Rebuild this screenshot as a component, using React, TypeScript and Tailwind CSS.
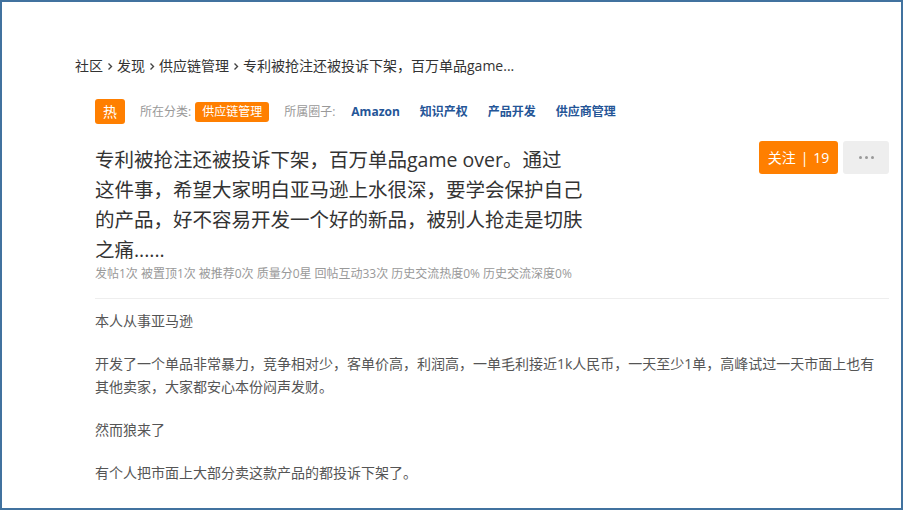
const font = { fontFamily: '"Open Sans", "Noto Sans CJK SC", sans-serif' };

function Chevron() {
  return (
    <svg width="6" height="9" viewBox="0 0 6 9" className="mx-[4px] mt-[2px]">
      <path d="M1.5 1.5 L4.5 4.5 L1.5 7.5" fill="none" stroke="#444" strokeWidth="1.4" />
    </svg>
  );
}

const crumbs = ["社区", "发现", "供应链管理"];
const circles = ["Amazon", "知识产权", "产品开发", "供应商管理"];
const stats = [
  "发帖1次",
  "被置顶1次",
  "被推荐0次",
  "质量分0星",
  "回帖互动33次",
  "历史交流热度0%",
  "历史交流深度0%",
];

export default function App() {
  return (
    <div className="w-[904px] h-[510px] bg-white" style={font}>
      <div className="w-[903px] h-[510px] border-2 border-[#41729f] pl-[73px] pt-[53px] overflow-hidden">
        {/* breadcrumb */}
        <div className="flex items-center h-[20px] text-[14px] text-[#333]">
          {crumbs.map((c) => (
            <span key={c} className="flex items-center">
              {c}
              <Chevron />
            </span>
          ))}
          <span>专利被抢注还被投诉下架，百万单品game...</span>
        </div>

        <div className="pl-[20px] pr-[12px]">
          {/* tags */}
          <div className="mt-[24px] flex items-center h-[25px] text-[12px]">
            <span className="w-[30px] h-[25px] rounded-[3px] bg-[#ff7f00] text-white text-[14px] flex items-center justify-center">
              热
            </span>
            <span className="ml-[15px] text-[#999]">所在分类:</span>
            <span className="ml-[4px] h-[20px] px-[7px] rounded-[3px] bg-[#ff7f00] text-white flex items-center">
              供应链管理
            </span>
            <span className="ml-[15px] text-[#999]">所属圈子:</span>
            <div className="ml-[16px] flex items-center gap-[20px]">
              {circles.map((c) => (
                <span key={c} className="font-bold text-[#245597]">
                  {c}
                </span>
              ))}
            </div>
          </div>

          {/* title + actions */}
          <div className="mt-[17px] flex justify-between">
            <div>
              <h1 className="mt-[4px] w-[490px] text-[19.5px] leading-[30px] text-[#333]">
                专利被抢注还被投诉下架，百万单品game over。通过
                <br />
                这件事，希望大家明白亚马逊上水很深，要学会保护自己的产品，好不容易开发一个好的新品，被别人抢走是切肤之痛......
              </h1>
              <div className="flex gap-[3px] text-[12px] leading-[18px] text-[#999]">
                {stats.map((s) => (
                  <span key={s}>{s}</span>
                ))}
              </div>
            </div>
            <div className="flex gap-[5px]">
              <button className="w-[79px] h-[33px] rounded-[3px] bg-[#ff7f00] text-white text-[14px] flex items-center justify-center gap-[5px]">
                <span>关注</span>
                <span>|</span>
                <span>19</span>
              </button>
              <button className="w-[46px] h-[33px] rounded-[3px] bg-[#eeeeee] flex items-center justify-center gap-[3px]">
                <span className="w-[3px] h-[3px] rounded-full bg-[#999]" />
                <span className="w-[3px] h-[3px] rounded-full bg-[#999]" />
                <span className="w-[3px] h-[3px] rounded-full bg-[#999]" />
              </button>
            </div>
          </div>

          <div className="mt-[15px] border-t border-[#eeeeee]" />

          {/* body */}
          <div className="pt-[10px] w-[786px] text-[14px] leading-[23px] text-[#555] space-y-[20px]">
            <p>本人从事亚马逊</p>
            <p>
              开发了一个单品非常暴力，竞争相对少，客单价高，利润高，一单毛利接近1k人民币，一天至少1单，高峰试过一天市面上也有其他卖家，大家都安心本份闷声发财。
            </p>
            <p>然而狼来了</p>
            <p>有个人把市面上大部分卖这款产品的都投诉下架了。</p>
          </div>
        </div>
      </div>
    </div>
  );
}
